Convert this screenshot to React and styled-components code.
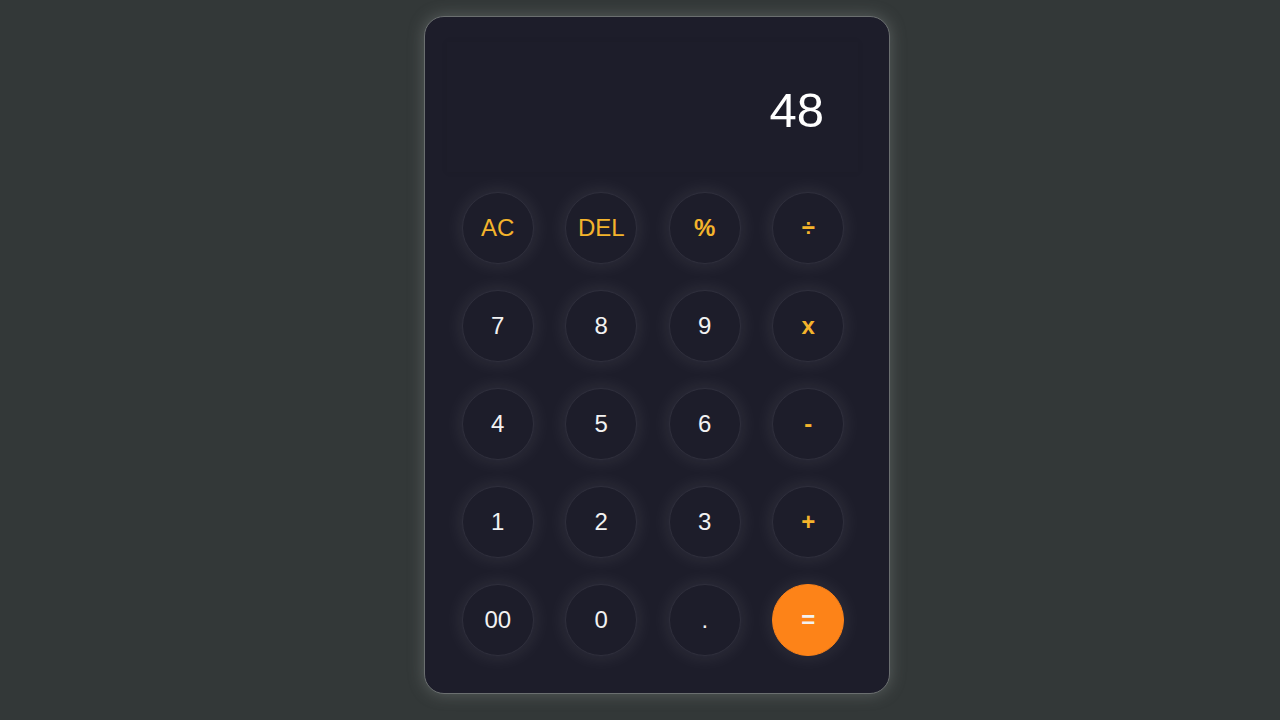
import React from "react"
import styled, { createGlobalStyle } from "styled-components"

const GlobalStyle = createGlobalStyle`
  html, body {
    margin: 0;
    padding: 0;
    background: #333838;
    font-family: "Liberation Sans", Arial, sans-serif;
  }
`

const keys = [
  { label: "AC", kind: "fn" },
  { label: "DEL", kind: "fn" },
  { label: "%", kind: "op" },
  { label: "÷", kind: "op" },
  { label: "7" },
  { label: "8" },
  { label: "9" },
  { label: "x", kind: "op" },
  { label: "4" },
  { label: "5" },
  { label: "6" },
  { label: "-", kind: "op" },
  { label: "1" },
  { label: "2" },
  { label: "3" },
  { label: "+", kind: "op" },
  { label: "00" },
  { label: "0" },
  { label: "." },
  { label: "=", kind: "equals" },
]

const Calculator = () => {
  return (
    <Page>
      <GlobalStyle />
      <Card>
        <Display>
          <Value>48</Value>
        </Display>
        <Keypad>
          {keys.map((k) => (
            <Key key={k.label} $kind={k.kind}>
              {k.label}
            </Key>
          ))}
        </Keypad>
      </Card>
    </Page>
  )
}

export default Calculator

const Page = styled.div`
  width: 100%;
  height: 720px;
  display: flex;
  justify-content: center;
  align-items: flex-start;
  padding: 16px 0 0 34px;
  box-sizing: border-box;
  overflow: hidden;
`

const Card = styled.div`
  width: 466px;
  box-sizing: border-box;
  background: #1d1d2a;
  border: 1px solid #6b6f70;
  border-radius: 20px;
  padding: 25px 29px 37px 21px;
  box-shadow: 0 0 16px rgba(160, 170, 165, 0.35);
  display: flex;
  flex-direction: column;
  gap: 20px;
`

const Display = styled.div`
  height: 130px;
  margin: 0 2px 0 1px;
  display: flex;
  align-items: center;
  justify-content: flex-end;
  padding-right: 34px;
  background: rgba(255, 255, 255, 0.003);
  box-shadow: 0 0 6px rgba(0, 0, 0, 0.08);
`

const Value = styled.span`
  color: #ffffff;
  font-size: 49px;
  line-height: 1;
  margin-top: 6px;
`

const Keypad = styled.div`
  display: grid;
  grid-template-columns: repeat(4, 103.5px);
  grid-auto-rows: 72px;
  row-gap: 26px;
  justify-items: center;
`

const Key = styled.button`
  width: 72px;
  height: 72px;
  border-radius: 50%;
  box-sizing: border-box;
  border: 1px solid ${(p) => (p.$kind === "equals" ? "#fd8318" : "#2f2f3c")};
  background: ${(p) => (p.$kind === "equals" ? "#fd8318" : "#1d1d2a")};
  box-shadow: 0 0 20px rgba(255, 255, 255, 0.1);
  color: ${(p) =>
    p.$kind === "fn" || p.$kind === "op" ? "#f4b42c" : "#f2f2f2"};
  font-family: "Liberation Sans", Arial, sans-serif;
  font-size: 24px;
  font-weight: ${(p) => (p.$kind === "op" || p.$kind === "equals" ? 700 : 400)};
  display: flex;
  align-items: center;
  justify-content: center;
  padding: 0;
  cursor: pointer;
`
